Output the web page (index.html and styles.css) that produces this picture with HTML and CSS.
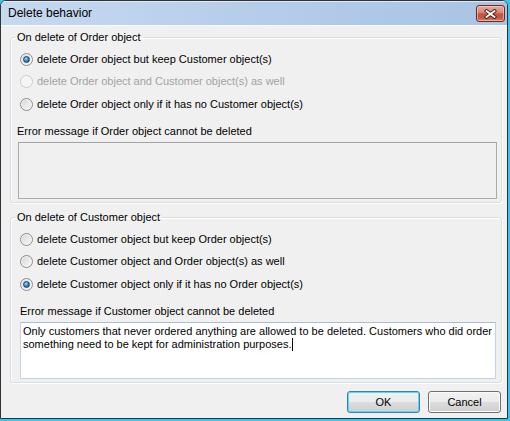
FILE: index.html
```html
<!DOCTYPE html>
<html>
<head>
<meta charset="utf-8">
<link rel="stylesheet" href="styles.css">
</head>
<body>
<div class="window">
  <div class="titlebar">
    <span class="title">Delete behavior</span>
    <div class="close">
      <svg width="13" height="10" viewBox="0 0 13 10">
        <path d="M2.5 2 L10.5 8 M10.5 2 L2.5 8" stroke="#4a1c16" stroke-width="3.6" stroke-linecap="square" fill="none"/>
        <path d="M2.5 2 L10.5 8 M10.5 2 L2.5 8" stroke="#ffffff" stroke-width="1.8" stroke-linecap="square" fill="none"/>
      </svg>
    </div>
  </div>
  <div class="client">
    <fieldset class="group">
      <legend>On delete of Order object</legend>
      <div class="gbody">
        <div class="opt"><span class="radio checked"></span><span>delete Order object but keep Customer object(s)</span></div>
        <div class="opt disabled"><span class="radio"></span><span>delete Order object and Customer object(s) as well</span></div>
        <div class="opt"><span class="radio"></span><span>delete Order object only if it has no Customer object(s)</span></div>
        <div class="caption first">Error message if Order object cannot be deleted</div>
        <div class="textbox readonly"></div>
      </div>
    </fieldset>
    <fieldset class="group second">
      <legend>On delete of Customer object</legend>
      <div class="gbody">
        <div class="opt"><span class="radio"></span><span>delete Customer object but keep Order object(s)</span></div>
        <div class="opt"><span class="radio"></span><span>delete Customer object and Order object(s) as well</span></div>
        <div class="opt"><span class="radio checked"></span><span>delete Customer object only if it has no Order object(s)</span></div>
        <div class="caption">Error message if Customer object cannot be deleted</div>
        <div class="textbox edit">Only customers that never ordered anything are allowed to be deleted. Customers who did order<br>something need to be kept for administration purposes.<span class="caret"></span></div>
      </div>
    </fieldset>
    <div class="buttons">
      <button class="btn default">OK</button>
      <button class="btn">Cancel</button>
    </div>
  </div>
</div>
</body>
</html>
```

FILE: styles.css
```css
html, body {
  margin: 0;
  padding: 0;
}
body {
  background: #3ec4ec;
  width: 510px;
  height: 421px;
  overflow: hidden;
  font-family: "Liberation Sans", Arial, sans-serif;
  font-size: 11px;
  color: #000;
}
.window {
  width: 508px;
  height: 419px;
  box-sizing: border-box;
  border: 1px solid #2f3338;
  border-radius: 6px 6px 0 0;
  background: #f0f0f0;
  overflow: hidden;
  display: flex;
  flex-direction: column;
}
.titlebar {
  height: 24px;
  flex: none;
  display: flex;
  align-items: center;
  justify-content: space-between;
  padding: 0 2px 0 7px;
  background: linear-gradient(to right, #c6d9ef 0%, #b6cdea 50%, #a9c3e4 100%);
  box-shadow: inset 0 1px 0 #dfeaf7;
}
.title {
  font-size: 12px;
  line-height: 14px;
  color: #000;
  margin-top: -1px;
}
.close {
  align-self: flex-start;
  margin-top: 4px;
  width: 29px;
  height: 17px;
  box-sizing: border-box;
  border: 1px solid #6b2a22;
  border-radius: 3px;
  background: linear-gradient(#e8aa9d 0%, #d98473 45%, #c5513e 52%, #c35a44 80%, #d2826c 100%);
  box-shadow: inset 0 0 0 1px rgba(255, 220, 210, 0.55);
  display: flex;
  align-items: center;
  justify-content: center;
}
.close svg {
  display: block;
}
.client {
  flex: 1;
  padding: 6px 0 0 9px;
  box-shadow: inset 0 1px 0 #f8fbfe;
}
.group {
  margin: 0;
  padding: 0;
  width: 492px;
  box-sizing: border-box;
  min-width: 0;
  border: 1px solid #d5dfe5;
  border-radius: 3px;
  box-shadow: inset 1px 1px 0 #ffffff, 1px 1px 0 #ffffff;
}
.group.second {
  margin-top: 8px;
}
.group legend {
  margin-left: 4px;
  padding: 0 2px;
  line-height: 13px;
  height: 13px;
}
.gbody {
  padding: 4px 4px 3px 7px;
}
.opt {
  display: flex;
  align-items: center;
  gap: 4px;
  height: 22.5px;
  margin-left: 2px;
  line-height: 13px;
}
.opt.disabled {
  color: #a3a3a3;
}
.radio {
  position: relative;
  flex: none;
  width: 13px;
  height: 13px;
  box-sizing: border-box;
  border-radius: 50%;
  border: 1px solid #8a8c8e;
  background: linear-gradient(135deg, #cfd0d1 0%, #e8e8e8 50%, #fbfbfb 100%);
  box-shadow: inset 0 0 0 1px #f6f6f6;
}
.opt.disabled .radio {
  border-color: #c9cacb;
  background: #f4f4f4;
  box-shadow: inset 0 0 0 1px #fafafa;
}
.radio.checked::after {
  content: "";
  position: absolute;
  left: 2px;
  top: 2px;
  width: 7px;
  height: 7px;
  box-sizing: border-box;
  border-radius: 50%;
  border: 1px solid #1c4a76;
  background: radial-gradient(circle at 40% 35%, #b4e2fb 0%, #4aa0dc 35%, #1d5a92 75%, #12406e 100%);
}
.caption {
  margin-top: 9.5px;
  line-height: 13px;
  height: 13px;
  margin-left: 2px;
}
.caption.first {
  margin-left: -1px;
}
.textbox {
  margin-top: 4px;
  height: 57px;
  box-sizing: border-box;
}
.textbox.readonly {
  width: 479px;
  border: 1px solid #acacac;
  border-top-color: #a3a3a3;
  background: #f0f0f0;
}
.textbox.edit {
  width: 476px;
  margin-left: 2px;
  border: 1px solid #c3d3e4;
  border-top-color: #a9bdd4;
  background: #ffffff;
  padding: 2px 2px;
  line-height: 13px;
}
.caret {
  display: inline-block;
  width: 1px;
  height: 13px;
  background: #000;
  vertical-align: top;
  margin-left: 1px;
}
.buttons {
  display: flex;
  justify-content: flex-end;
  gap: 8px;
  margin-top: 8px;
  padding-right: 6px;
}
.btn {
  width: 73px;
  height: 22px;
  box-sizing: border-box;
  margin: 0;
  padding: 0;
  border: 1px solid #707070;
  border-radius: 3px;
  background: linear-gradient(#f2f2f2 0%, #ebebeb 50%, #dddddd 50%, #cfcfcf 100%);
  box-shadow: inset 0 0 0 1px #fbfbfb;
  font-family: "Liberation Sans", Arial, sans-serif;
  font-size: 11px;
  color: #000;
  line-height: 18px;
}
.btn.default {
  border-color: #3c7fb1;
  box-shadow: inset 0 0 0 1px #56d8fb;
}
```
